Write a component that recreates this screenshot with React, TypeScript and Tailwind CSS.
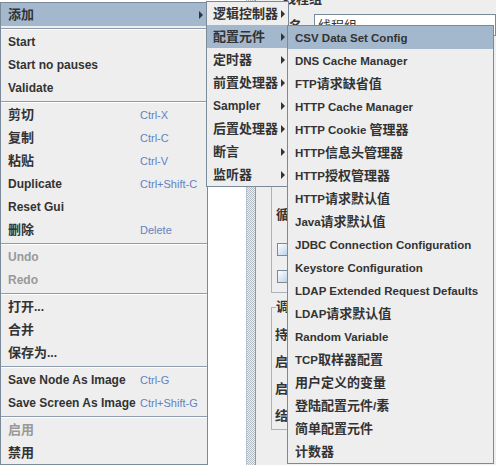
import React from "react";

type Entry = {
  label?: string;
  shortcut?: string;
  disabled?: boolean;
  active?: boolean;
  arrow?: boolean;
  sep?: boolean;
};

const mainMenu: Entry[] = [
  { label: "添加", active: true, arrow: true },
  { sep: true },
  { label: "Start" },
  { label: "Start no pauses" },
  { label: "Validate" },
  { sep: true },
  { label: "剪切", shortcut: "Ctrl-X" },
  { label: "复制", shortcut: "Ctrl-C" },
  { label: "粘贴", shortcut: "Ctrl-V" },
  { label: "Duplicate", shortcut: "Ctrl+Shift-C" },
  { label: "Reset Gui" },
  { label: "删除", shortcut: "Delete" },
  { sep: true },
  { label: "Undo", disabled: true },
  { label: "Redo", disabled: true },
  { sep: true },
  { label: "打开..." },
  { label: "合并" },
  { label: "保存为..." },
  { sep: true },
  { label: "Save Node As Image", shortcut: "Ctrl-G" },
  { label: "Save Screen As Image", shortcut: "Ctrl+Shift-G" },
  { sep: true },
  { label: "启用", disabled: true },
  { label: "禁用" },
];

const addMenu: Entry[] = [
  { label: "逻辑控制器", arrow: true },
  { label: "配置元件", arrow: true, active: true },
  { label: "定时器", arrow: true },
  { label: "前置处理器", arrow: true },
  { label: "Sampler", arrow: true },
  { label: "后置处理器", arrow: true },
  { label: "断言", arrow: true },
  { label: "监听器", arrow: true },
];

const configMenu: Entry[] = [
  { label: "CSV Data Set Config", active: true },
  { label: "DNS Cache Manager" },
  { label: "FTP请求缺省值" },
  { label: "HTTP Cache Manager" },
  { label: "HTTP Cookie 管理器" },
  { label: "HTTP信息头管理器" },
  { label: "HTTP授权管理器" },
  { label: "HTTP请求默认值" },
  { label: "Java请求默认值" },
  { label: "JDBC Connection Configuration" },
  { label: "Keystore Configuration" },
  { label: "LDAP Extended Request Defaults" },
  { label: "LDAP请求默认值" },
  { label: "Random Variable" },
  { label: "TCP取样器配置" },
  { label: "用户定义的变量" },
  { label: "登陆配置元件/素" },
  { label: "简单配置元件" },
  { label: "计数器" },
];

const CJK = /([\u2e80-\u9fff\uff00-\uffef]+)/;

// chinese glyphs come out a pixel larger than the latin ones in the menu font
function MixedText({ text }: { text: string }) {
  return (
    <>
      {text.split(CJK).map((part, i) =>
        i % 2 === 1 ? (
          <span key={i} className="text-[13px]">
            {part}
          </span>
        ) : (
          part
        ),
      )}
    </>
  );
}

function Arrow() {
  return (
    <svg width="4" height="8" viewBox="0 0 4 8" className="shrink-0">
      <path d="M0 0L4 4L0 8Z" fill="#333333" />
    </svg>
  );
}

function Separator() {
  return (
    <div className="h-[4px] pt-[2px]">
      <div className="h-px bg-[#8e9cae]" />
      <div className="h-px bg-white" />
    </div>
  );
}

interface RowProps {
  entry: Entry;
  padLeft: string;
  padRight: string;
  withShortcuts?: boolean;
}

function MenuRow({ entry, padLeft, padRight, withShortcuts }: RowProps) {
  if (entry.sep) return <Separator />;
  return (
    <div
      className={`flex h-[23px] items-center ${padLeft} ${padRight} ${
        entry.active ? "bg-[#a3b8cc]" : ""
      } ${entry.disabled ? "text-[#999999]" : "text-[#333333]"}`}
    >
      <span
        className={`whitespace-nowrap leading-[16px] ${
          withShortcuts ? "min-w-[132px]" : ""
        }`}
      >
        <MixedText text={entry.label ?? ""} />
      </span>
      {entry.shortcut && (
        <span className="whitespace-nowrap text-[11px] font-normal leading-[14px] text-[#6382bf]">
          {entry.shortcut}
        </span>
      )}
      {entry.arrow && (
        <span className="ml-auto flex items-center">
          <Arrow />
        </span>
      )}
    </div>
  );
}

function CheckBox() {
  return (
    <div className="h-[13px] w-[13px] shrink-0 border border-[#7a8a99] bg-[linear-gradient(135deg,#ffffff,#b8cfe5)]" />
  );
}

function Background() {
  return (
    <div className="flex h-full">
      <div className="w-[247px] border-r border-[#b8c0c8] bg-white" />
      <div className="w-[9px] border-r border-[#8e9aa6] bg-[#eeeeee] bg-[repeating-conic-gradient(#b4bcc4_0_25%,#eeeeee_0_50%)] bg-[length:2px_2px]" />
      <div className="flex-1 font-bold text-[#333333]">
        <div className="flow-root h-[14px]">
          <div className="-mt-[8px] pl-[27px] text-[13px] leading-[13px]">
            线程组
          </div>
        </div>
        <div className="flex h-[22px]">
          <span className="w-[58px] shrink-0 pl-[33px] pt-[5px] text-[13px] leading-[14px]">
            名称：
          </span>
          <div className="flex-1 border border-[#7a8a99] bg-white pl-[3px] pt-[4px] text-[13px] font-normal leading-[14px]">
            线程组
          </div>
        </div>
        <div className="pl-[15px] pr-[10px]">
          <div className="mt-[114px] h-[143px] border border-[#a9b3bd] pl-[4px] pt-[53px]">
            <div className="flex h-[22px] items-center text-[13px]">
              循环次数
            </div>
            <div className="mt-[15px] flex h-[17px] items-center gap-[4px] pl-[1px] text-[12px]">
              <CheckBox />
              <span>延迟创建线程直到需要</span>
            </div>
            <div className="mt-[10px] flex h-[17px] items-center gap-[4px] pl-[1px] text-[12px]">
              <CheckBox />
              <span>调度器</span>
            </div>
          </div>
          <fieldset className="mt-[6px] h-[131px] border border-[#a9b3bd] pl-[3px] pt-[6px]">
            <legend className="ml-[1px] text-[13px] leading-[16px]">
              调度器配置
            </legend>
            <div className="flex h-[27px] items-center text-[13px]">
              持续时间（秒）
            </div>
            <div className="flex h-[27px] items-center text-[13px]">
              启动延迟（秒）
            </div>
            <div className="flex h-[27px] items-center text-[13px]">
              启动时间
            </div>
            <div className="flex h-[27px] items-center text-[13px]">
              结束时间
            </div>
          </fieldset>
        </div>
      </div>
    </div>
  );
}

export default function App() {
  return (
    <div className="relative h-[465px] w-[496px] overflow-hidden bg-[#eeeeee] font-['Liberation_Sans','Noto_Sans_CJK_SC',sans-serif] text-[12px] font-bold">
      <Background />

      <div className="absolute left-0 top-[2px] w-[208px] border border-[#7a8a99] bg-[#eeeeee]">
        {mainMenu.map((entry, i) => (
          <MenuRow
            key={i}
            entry={entry}
            padLeft="pl-[7px]"
            padRight="pr-[4px]"
            withShortcuts
          />
        ))}
      </div>

      <div className="absolute left-[206px] top-[1px] w-[83px] border border-[#7a8a99] bg-[#eeeeee]">
        {addMenu.map((entry, i) => (
          <MenuRow key={i} entry={entry} padLeft="pl-[6px]" padRight="pr-[3px]" />
        ))}
      </div>

      <div className="absolute left-[287px] top-[25px] w-[207px] border border-[#7a8a99] bg-[#eeeeee] text-[11.5px]">
        {configMenu.map((entry, i) => (
          <MenuRow key={i} entry={entry} padLeft="pl-[7px]" padRight="pr-[4px]" />
        ))}
      </div>
    </div>
  );
}
